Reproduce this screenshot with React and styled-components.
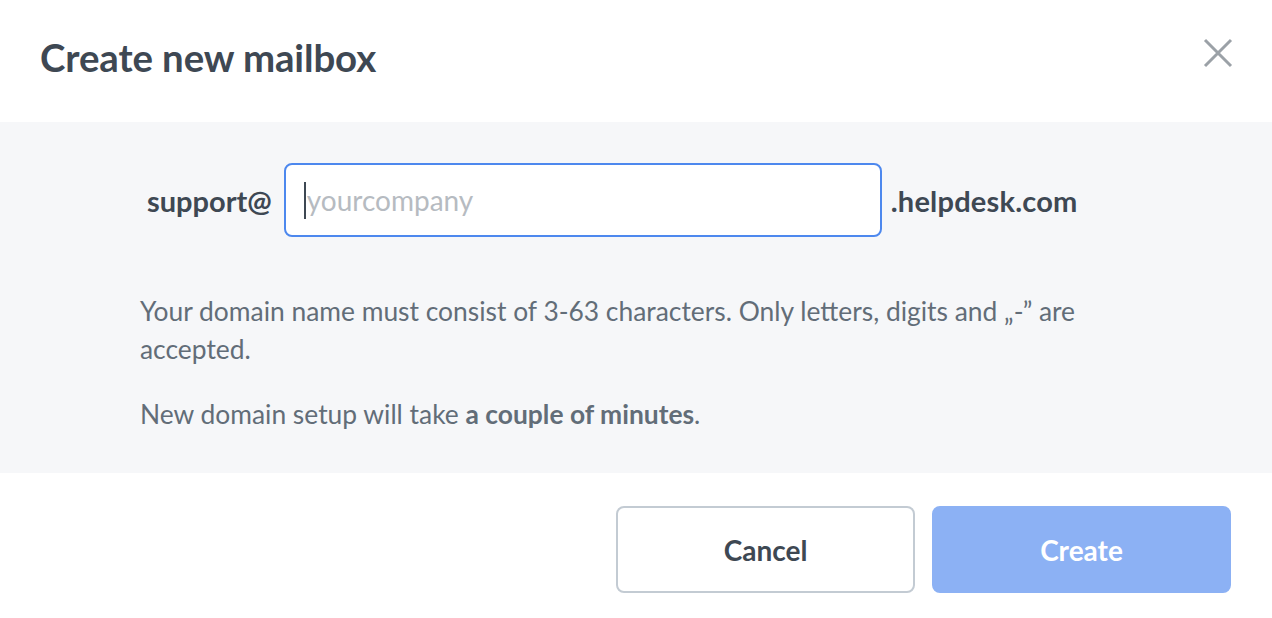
import React from "react";
import styled, { createGlobalStyle } from "styled-components";

const Global = createGlobalStyle`
  html, body { margin: 0; padding: 0; background: #ffffff; }
  body { font-family: Lato, "Open Sans", sans-serif; -webkit-font-smoothing: antialiased; }
  * { box-sizing: border-box; }
`;

const Modal = styled.div`
  width: 1272px;
  height: 618px;
  display: flex;
  flex-direction: column;
  background: #ffffff;
`;

const Header = styled.div`
  height: 122px;
  display: flex;
  align-items: center;
  justify-content: space-between;
  padding: 0 36px 0 40px;
`;

const Title = styled.h1`
  margin: 0;
  font-size: 38.4px;
  font-weight: 700;
  color: #3e4853;
  letter-spacing: -0.1px;
  padding-bottom: 8px;
`;

const CloseButton = styled.button`
  width: 36px;
  height: 36px;
  border: 0;
  background: none;
  padding: 0;
  display: flex;
  align-items: center;
  justify-content: center;
  cursor: pointer;
  margin-bottom: 16px;
`;

const Body = styled.div`
  background: #f6f7f9;
  padding: 41px 140px 40px;
`;

const AddressRow = styled.div`
  display: flex;
  align-items: center;
  margin-left: 7px;
`;

const Affix = styled.span`
  font-size: 29px;
  font-weight: 700;
  color: #3e4853;
  letter-spacing: ${(p) => p.$spacing || 0}px;
`;

const Field = styled.div`
  position: relative;
  flex: 0 0 598px;
  margin: 0 ${(p) => p.$right}px 0 ${(p) => p.$left}px;
`;

const Input = styled.input`
  display: block;
  width: 100%;
  height: 74px;
  border: 2px solid #4d88ee;
  border-radius: 8px;
  background: #ffffff;
  padding: 0 21px;
  font-family: Lato, sans-serif;
  font-size: 28px;
  color: #3e4853;
  outline: none;
  caret-color: transparent;
  &::placeholder { color: #b6bbc1; }
`;

const Caret = styled.span`
  position: absolute;
  left: 20px;
  top: 19px;
  width: 2px;
  height: 37px;
  background: #3e4853;
  pointer-events: none;
`;

const Note = styled.p`
  margin: ${(p) => p.$top}px 0 0;
  font-size: 26.4px;
  line-height: 38px;
  color: #626d78;
  strong { font-weight: 700; }
`;

const Footer = styled.div`
  flex: 1;
  display: flex;
  justify-content: flex-end;
  align-items: flex-start;
  gap: 17px;
  padding: 33px 41px 0 0;
`;

const Button = styled.button`
  width: 299px;
  height: 87px;
  border-radius: 8px;
  font-family: Lato, sans-serif;
  font-size: 28px;
  font-weight: 700;
  cursor: pointer;
  border: 2px solid ${(p) => (p.$primary ? "#8cb1f4" : "#c3cbd3")};
  background: ${(p) => (p.$primary ? "#8cb1f4" : "#ffffff")};
  color: ${(p) => (p.$primary ? "#ffffff" : "#3e4853")};
`;

export default function App() {
  return (
    <Modal>
      <Global />
      <Header>
        <Title>Create new mailbox</Title>
        <CloseButton aria-label="Close">
          <svg width="30" height="30" viewBox="0 0 30 30">
            <path d="M2 2 L28 28 M28 2 L2 28" stroke="#9ba1a7" strokeWidth="3" />
          </svg>
        </CloseButton>
      </Header>
      <Body>
        <AddressRow>
          <Affix>support@</Affix>
          <Field $left={12} $right={9}>
            <Input placeholder="yourcompany" />
            <Caret />
          </Field>
          <Affix $spacing={0.2}>.helpdesk.com</Affix>
        </AddressRow>
        <Note $top={55}>
          Your domain name must consist of 3-63 characters. Only letters, digits and „-” are accepted.
        </Note>
        <Note $top={27}>
          New domain setup will take <strong>a couple of minutes</strong>.
        </Note>
      </Body>
      <Footer>
        <Button>Cancel</Button>
        <Button $primary>Create</Button>
      </Footer>
    </Modal>
  );
}
